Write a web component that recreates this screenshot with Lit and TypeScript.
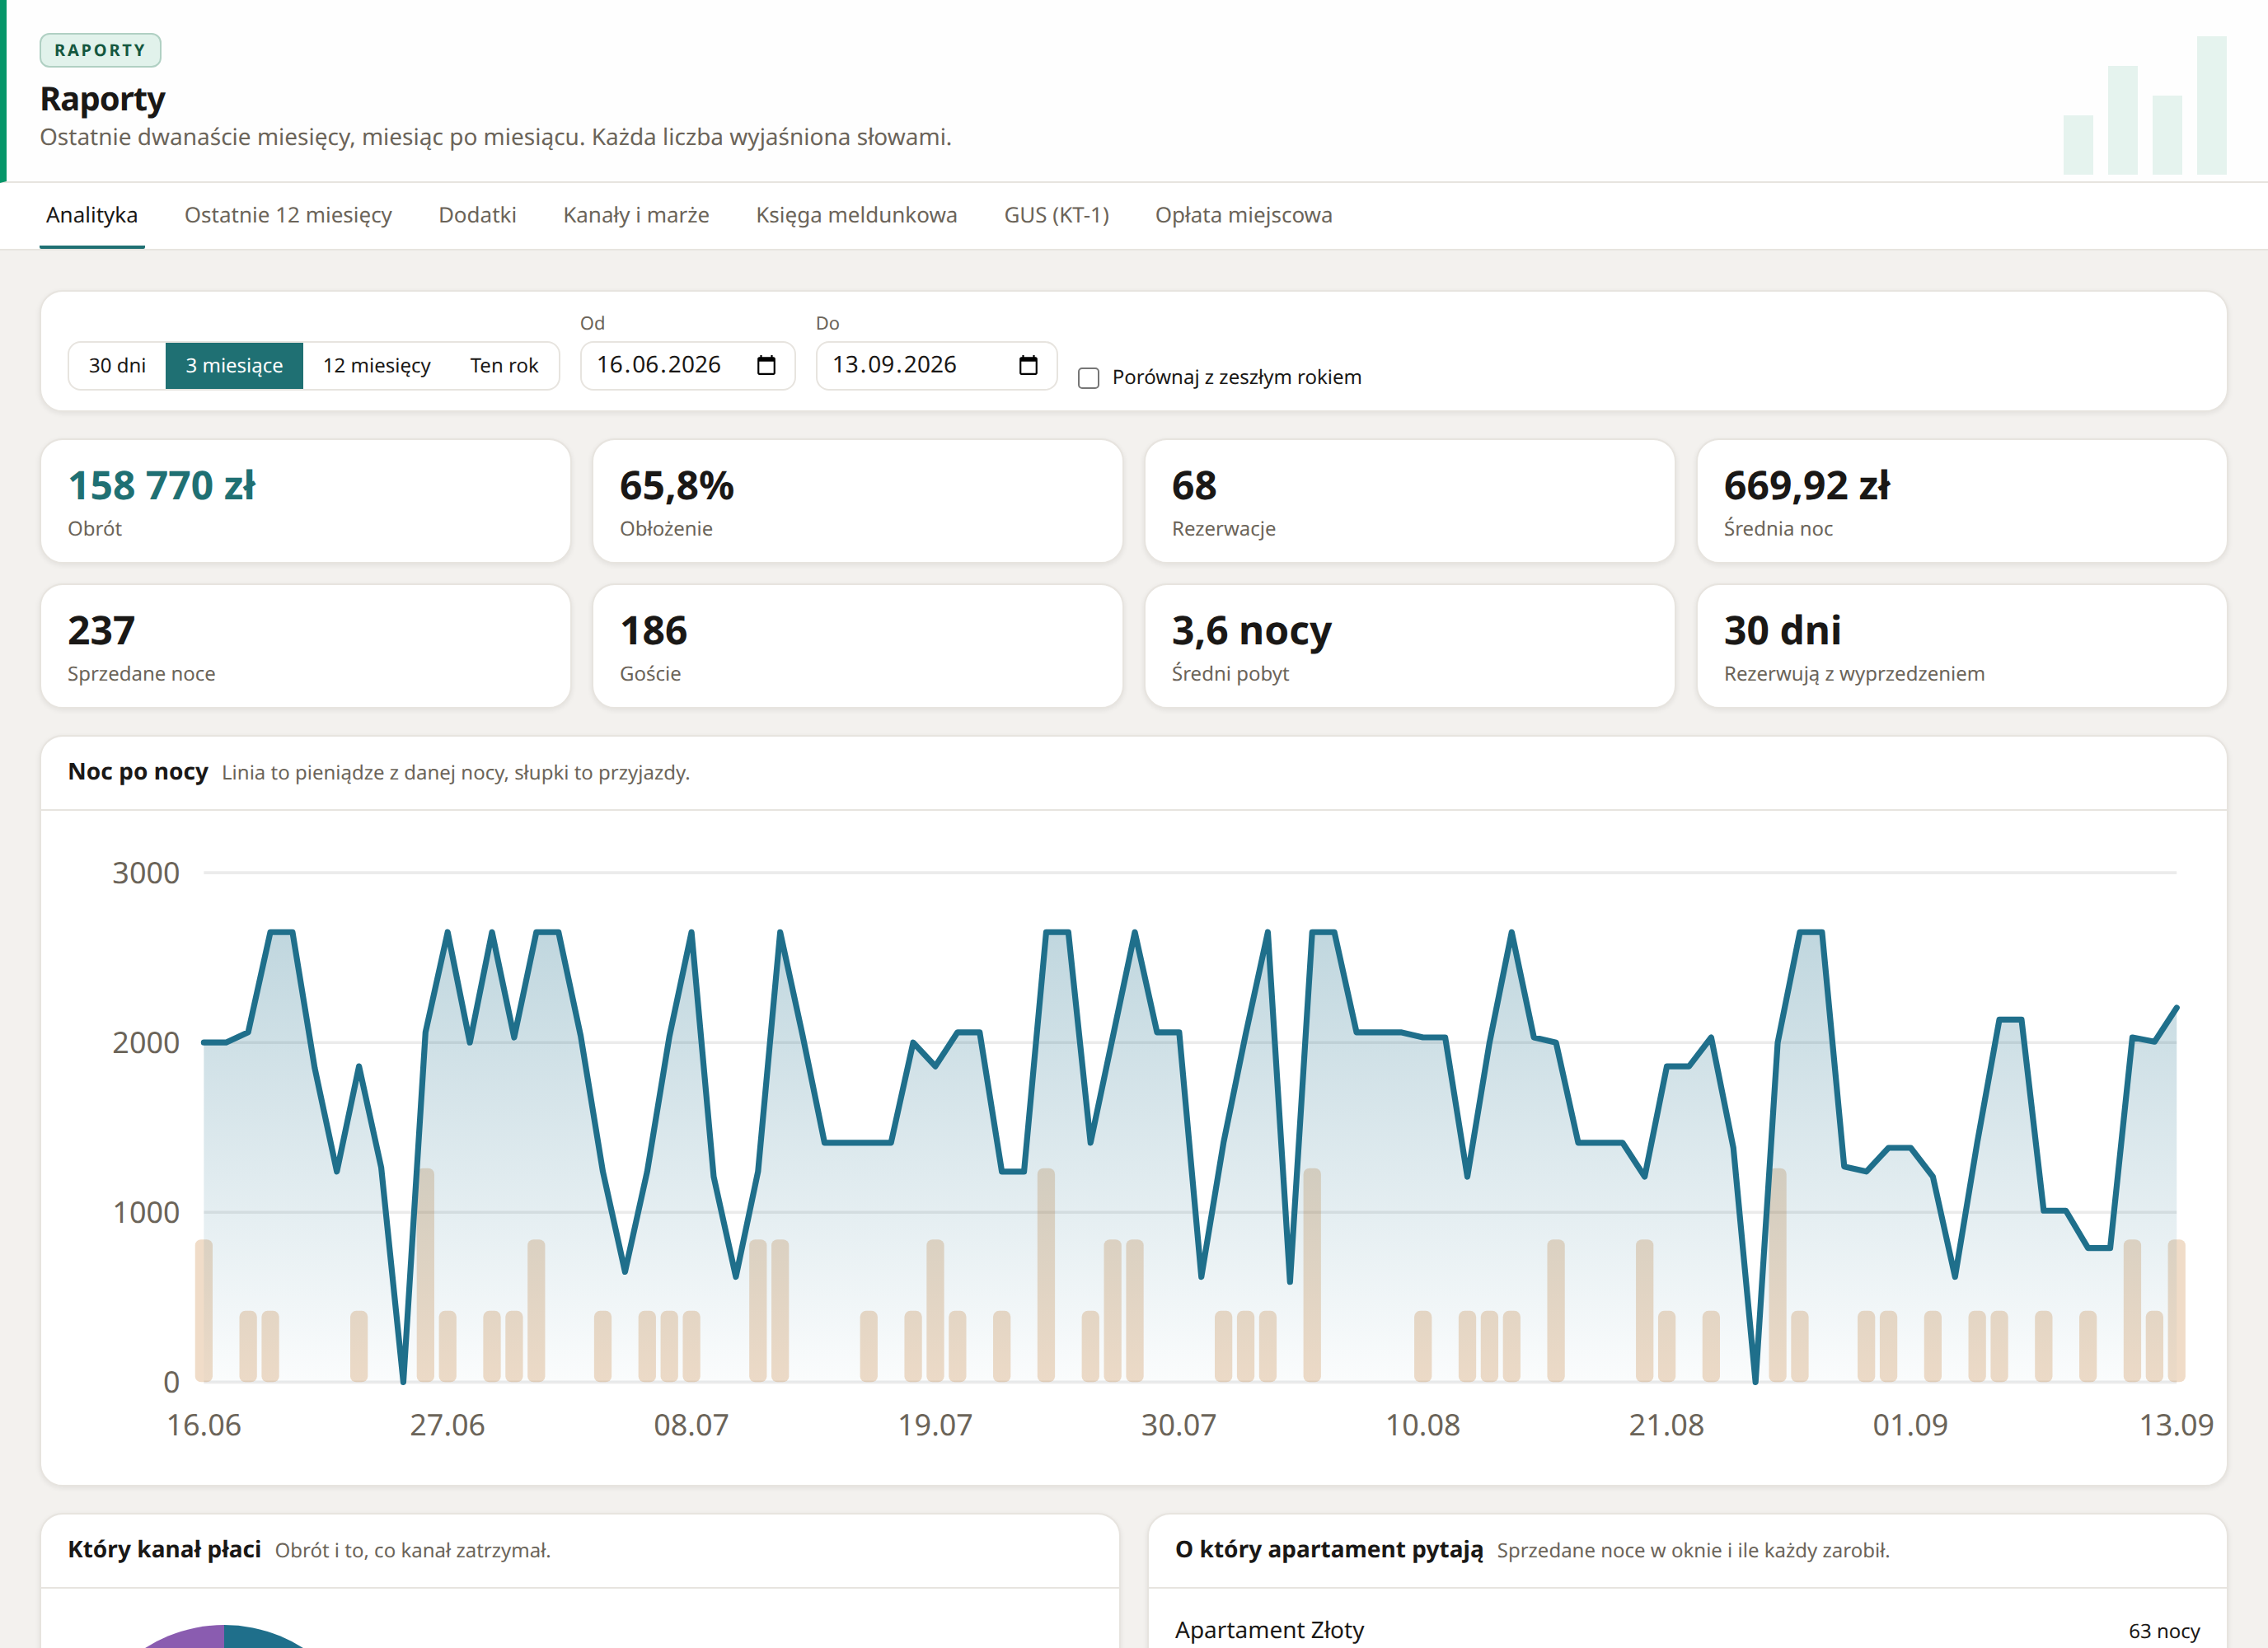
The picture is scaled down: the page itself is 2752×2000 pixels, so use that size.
import { LitElement, html, svg, css, TemplateResult } from 'lit';
import { customElement, property } from 'lit/decorators.js';
import { classMap } from 'lit/directives/class-map.js';

// one entry per night, 16.06 - 13.09
const REVENUE = [
  2000, 2000, 2060, 2650, 2650, 1850, 1240, 1860, 1265, 0,
  2060, 2650, 2000, 2650, 2030, 2650, 2650, 2040, 1240, 650,
  1240, 2035, 2650, 1210, 620, 1240, 2650, 2050, 1410, 1410,
  1410, 1410, 2000, 1860, 2060, 2060, 1240, 1240, 2650, 2650,
  1410, 2030, 2650, 2060, 2060, 620, 1410, 2050, 2650, 590,
  2650, 2650, 2060, 2060, 2060, 2030, 2030, 1210, 2000, 2650,
  2030, 2000, 1410, 1410, 1410, 1210, 1860, 1860, 2030, 1380,
  0, 2000, 2650, 2650, 1270, 1240, 1380, 1380, 1210, 620,
  1410, 2135, 2135, 1010, 1010, 790, 790, 2030, 2005, 2205,
];

const ARRIVALS = [
  2, 0, 1, 1, 0, 0, 0, 1, 0, 0,
  3, 1, 0, 1, 1, 2, 0, 0, 1, 0,
  1, 1, 1, 0, 0, 2, 2, 0, 0, 0,
  1, 0, 1, 2, 1, 0, 1, 0, 3, 0,
  1, 2, 2, 0, 0, 0, 1, 1, 1, 0,
  3, 0, 0, 0, 0, 1, 0, 1, 1, 1,
  0, 2, 0, 0, 0, 2, 1, 0, 1, 0,
  0, 3, 1, 0, 0, 1, 1, 0, 1, 0,
  1, 1, 0, 1, 0, 1, 0, 2, 1, 2,
];

const TICKS: [number, string][] = [
  [0, '16.06'],
  [11, '27.06'],
  [22, '08.07'],
  [33, '19.07'],
  [44, '30.07'],
  [55, '10.08'],
  [66, '21.08'],
  [77, '01.09'],
  [89, '13.09'],
];

@customElement('nightly-chart')
export class NightlyChart extends LitElement {
  static styles = css`
    :host {
      display: block;
    }

    svg {
      display: block;
      width: 100%;
      overflow: visible;
    }

    .grid {
      stroke: #000;
      stroke-opacity: 0.08;
    }

    .label {
      font-size: 10px;
      fill: #6b6459;
    }

    .arrivals {
      fill: #c9803a;
      opacity: 0.28;
    }

    .line {
      fill: none;
      stroke: #1f6f8b;
      stroke-width: 2;
      stroke-linejoin: round;
      stroke-linecap: round;
    }
  `;

  private left = 46;
  private right = 712;
  private top = 12;
  private bottom = 184;

  private x(i: number): number {
    return this.left + (i * (this.right - this.left)) / (REVENUE.length - 1);
  }

  private y(value: number): number {
    return this.bottom - (value / 3000) * (this.bottom - this.top);
  }

  render(): TemplateResult {
    const points = REVENUE.map((v, i) => `${this.x(i).toFixed(2)},${this.y(v).toFixed(2)}`).join(' L');
    const barWidth = ((this.right - this.left) / REVENUE.length) * 0.8;
    const barUnit = ((this.bottom - this.top) * 0.42) / 3;

    return html`
      <svg viewBox="0 0 720 209.8">
        <defs>
          <linearGradient id="area" x1="0" y1="0" x2="0" y2="1">
            <stop offset="0" stop-color="#1f6f8b" stop-opacity="0.28"></stop>
            <stop offset="1" stop-color="#1f6f8b" stop-opacity="0.02"></stop>
          </linearGradient>
        </defs>
        ${[0, 1000, 2000, 3000].map(
          (v) => svg`
            <line class="grid" x1=${this.left} x2=${this.right} y1=${this.y(v)} y2=${this.y(v)}></line>
            <text class="label" x=${this.left - 8} y=${this.y(v) + 3.5} text-anchor="end">${v}</text>
          `
        )}
        ${ARRIVALS.map((n, i) =>
          n
            ? svg`<rect class="arrivals" x=${this.x(i) - barWidth / 2} y=${this.bottom - n * barUnit}
                width=${barWidth} height=${n * barUnit} rx="2"></rect>`
            : ''
        )}
        <path fill="url(#area)" d="M${this.left},${this.bottom} L${points} L${this.right},${this.bottom} Z"></path>
        <path class="line" d="M${points}"></path>
        ${TICKS.map(([i, text]) => svg`<text class="label" x=${this.x(i)} y="202" text-anchor="middle">${text}</text>`)}
      </svg>
    `;
  }
}

@customElement('date-field')
export class DateField extends LitElement {
  @property()
  label = '';

  @property()
  value = '';

  static styles = css`
    :host {
      display: flex;
      flex-direction: column;
      gap: 6px;
    }

    .label {
      font-size: 22px;
      line-height: 32px;
      color: #6b6459;
    }

    .box {
      box-sizing: border-box;
      height: 60px;
      padding: 0 21px 0 16px;
      display: flex;
      align-items: center;
      justify-content: space-between;
      border: 2px solid #e7e4df;
      border-radius: 16px;
      font-size: 28px;
      line-height: 38px;
    }

    .value {
      margin-top: -4px;
    }

    .part {
      padding: 0 2px;
    }

    svg {
      width: 26px;
      height: 26px;
      margin-top: -2px;
    }
  `;

  render(): TemplateResult {
    const [day, month, year] = this.value.split('.');
    return html`
      <span class="label">${this.label}</span>
      <div class="box">
        <span class="value"
          ><span class="part">${day}</span>.<span class="part">${month}</span>.<span class="part">${year}</span></span
        >
        <svg viewBox="0 0 24 24">
          <path
            d="M20 3h-1V1h-2v2H7V1H5v2H4c-1.1 0-2 .9-2 2v16c0 1.1.9 2 2 2h16c1.1 0 2-.9 2-2V5c0-1.1-.9-2-2-2zm0 18H4V8h16v13z"
          ></path>
        </svg>
      </div>
    `;
  }
}

@customElement('app-root')
export class AppRoot extends LitElement {
  private tabs = [
    'Analityka',
    'Ostatnie 12 miesięcy',
    'Dodatki',
    'Kanały i marże',
    'Księga meldunkowa',
    'GUS (KT-1)',
    'Opłata miejscowa',
  ];

  private ranges = ['30 dni', '3 miesiące', '12 miesięcy', 'Ten rok'];

  private stats = [
    ['158 770 zł', 'Obrót'],
    ['65,8%', 'Obłożenie'],
    ['68', 'Rezerwacje'],
    ['669,92 zł', 'Średnia noc'],
    ['237', 'Sprzedane noce'],
    ['186', 'Goście'],
    ['3,6 nocy', 'Średni pobyt'],
    ['30 dni', 'Rezerwują z wyprzedzeniem'],
  ];

  static styles = css`
    :host {
      display: block;
      height: 2000px;
      overflow: hidden;
      background: #f3f1ee;
      color: #1a1816;
      font-family: 'Noto Sans', sans-serif;
      font-size: 28px;
      text-rendering: geometricPrecision;
    }

    .header {
      box-sizing: border-box;
      height: 222px;
      padding: 40px 50px 0 40px;
      display: flex;
      justify-content: space-between;
      background: #fefefe;
      border-left: 8px solid #059669;
      border-bottom: 2px solid #e7e4df;
    }

    .badge {
      box-sizing: border-box;
      display: block;
      width: fit-content;
      height: 42px;
      padding: 0 16px;
      border: 2px solid #b0d0c3;
      border-radius: 12px;
      background: #e1f2eb;
      color: #14573f;
      font-size: 20px;
      line-height: 37px;
      font-weight: 700;
      letter-spacing: 2.8px;
    }

    h1 {
      margin: 9px 0 0;
      font-size: 40px;
      line-height: 55px;
      font-weight: 700;
      letter-spacing: -0.9px;
    }

    .lead {
      margin: 1px 0 0;
      font-size: 28px;
      line-height: 38px;
      color: #6b6459;
    }

    .art {
      width: 198px;
      height: 168px;
      margin-top: 4px;
      fill: #e5f3ee;
    }

    .tabs {
      box-sizing: border-box;
      height: 82px;
      padding: 0 48px;
      display: flex;
      gap: 40px;
      background: #fff;
      border-bottom: 2px solid #e7e4df;
    }

    .tab {
      box-sizing: border-box;
      height: 80px;
      padding: 19px 8px 0;
      font-size: 26px;
      line-height: 38px;
      color: #6b6459;
      border-bottom: 4px solid transparent;
      border-radius: 2px;
    }

    .tab.active {
      color: #1a1816;
      border-color: #1f7073;
    }

    .content {
      padding: 48px;
      display: flex;
      flex-direction: column;
      gap: 32px;
    }

    .card {
      box-sizing: border-box;
      background: #fff;
      border: 2px solid #e7e4df;
      border-radius: 28px;
      box-shadow: 0 2px 6px rgba(26, 24, 22, 0.08);
    }

    .filters {
      height: 148px;
      padding: 0 32px 24px;
      display: flex;
      align-items: flex-end;
      gap: 24px;
    }

    .ranges {
      box-sizing: border-box;
      height: 60px;
      display: flex;
      border: 2px solid #e7e4df;
      border-radius: 16px;
      overflow: hidden;
    }

    .range {
      padding: 11px 24px 0;
      font-size: 24px;
      line-height: 33px;
    }

    .range.active {
      background: #1f7073;
      color: #fff;
    }

    .from {
      width: 262px;
    }

    .to {
      width: 294px;
    }

    .compare {
      height: 30px;
      display: flex;
      align-items: center;
      gap: 16px;
      font-size: 24px;
      line-height: 33px;
    }

    .compare-text {
      margin-top: -3px;
    }

    .checkbox {
      box-sizing: border-box;
      width: 26px;
      height: 26px;
      border: 2px solid #767676;
      border-radius: 5px;
    }

    .stats {
      display: grid;
      grid-template-columns: repeat(4, 1fr);
      gap: 24px;
    }

    .stat {
      height: 152px;
      padding: 22px 32px 0;
    }

    .stat .value {
      font-size: 48px;
      line-height: 65px;
      font-weight: 700;
    }

    .stat.accent .value {
      color: #1f7073;
    }

    .stat .label {
      margin-top: 4px;
      font-size: 24px;
      line-height: 33px;
      color: #6b6459;
    }

    .card-head {
      box-sizing: border-box;
      height: 90px;
      padding: 23px 32px 0;
      display: flex;
      align-items: baseline;
      gap: 16px;
      border-bottom: 2px solid #e7e4df;
    }

    h2 {
      margin: 0;
      font-size: 28px;
      line-height: 38px;
      font-weight: 700;
      letter-spacing: 0.04px;
    }

    .hint {
      font-size: 24px;
      color: #6b6459;
    }

    .nightly {
      height: 912px;
    }

    .nightly nightly-chart {
      padding: 32px;
    }

    .pair {
      display: grid;
      grid-template-columns: 1fr 1fr;
      gap: 32px;
    }

    .pie {
      display: block;
      width: 380px;
      height: 380px;
      margin: 32px;
    }

    .rooms {
      padding: 31px 32px;
    }

    .room {
      display: flex;
      justify-content: space-between;
      align-items: baseline;
      line-height: 38px;
    }

    .nights {
      font-size: 24px;
    }
  `;

  private cardHead(title: string, hint: string): TemplateResult {
    return html`
      <div class="card-head">
        <h2>${title}</h2>
        <span class="hint">${hint}</span>
      </div>
    `;
  }

  render(): TemplateResult {
    return html`
      <header class="header">
        <div>
          <span class="badge">RAPORTY</span>
          <h1>Raporty</h1>
          <p class="lead">Ostatnie dwanaście miesięcy, miesiąc po miesiącu. Każda liczba wyjaśniona słowami.</p>
        </div>
        <svg class="art" viewBox="0 0 198 168">
          <rect x="0" y="96" width="36" height="72"></rect>
          <rect x="54" y="36" width="36" height="132"></rect>
          <rect x="108" y="72" width="36" height="96"></rect>
          <rect x="162" y="0" width="36" height="168"></rect>
        </svg>
      </header>
      <nav class="tabs">
        ${this.tabs.map((tab, i) => html`<span class=${classMap({ tab: true, active: i === 0 })}>${tab}</span>`)}
      </nav>
      <main class="content">
        <section class="card filters">
          <div class="ranges">
            ${this.ranges.map(
              (range, i) => html`<span class=${classMap({ range: true, active: i === 1 })}>${range}</span>`
            )}
          </div>
          <date-field class="from" label="Od" value="16.06.2026"></date-field>
          <date-field class="to" label="Do" value="13.09.2026"></date-field>
          <div class="compare">
            <span class="checkbox"></span>
            <span class="compare-text">Porównaj z zeszłym rokiem</span>
          </div>
        </section>
        <section class="stats">
          ${this.stats.map(
            ([value, label], i) => html`
              <div class=${classMap({ card: true, stat: true, accent: i === 0 })}>
                <div class="value">${value}</div>
                <div class="label">${label}</div>
              </div>
            `
          )}
        </section>
        <section class="card nightly">
          ${this.cardHead('Noc po nocy', 'Linia to pieniądze z danej nocy, słupki to przyjazdy.')}
          <nightly-chart></nightly-chart>
        </section>
        <div class="pair">
          <section class="card">
            ${this.cardHead('Który kanał płaci', 'Obrót i to, co kanał zatrzymał.')}
            <svg class="pie" viewBox="0 0 380 380">
              <path fill="#1f6f8b" d="M190 12a178 178 0 0 1 0 356z"></path>
              <path fill="#8a5cb0" d="M190 12a178 178 0 0 0 0 356z"></path>
            </svg>
          </section>
          <section class="card">
            ${this.cardHead('O który apartament pytają', 'Sprzedane noce w oknie i ile każdy zarobił.')}
            <div class="rooms">
              <div class="room">
                <span>Apartament Złoty</span>
                <span class="nights">63 nocy</span>
              </div>
            </div>
          </section>
        </div>
      </main>
    `;
  }
}
